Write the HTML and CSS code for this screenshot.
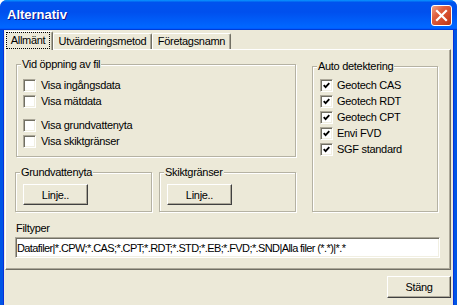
FILE: index.html
```html
<!DOCTYPE html>
<html lang="sv">

<head>
  <meta charset="UTF-8">
  <meta name="viewport" content="width=device-width, initial-scale=1.0">
  <title>Alternativ</title>
  <link rel="stylesheet" href="styles.css">
</head>

<body>
  <div class="window">
    <div class="titlebar">
      <span class="title">Alternativ</span>
      <button class="close" aria-label="Stäng">
        <svg width="13" height="13" viewBox="0 0 13 13">
          <path d="M2 2L11 11M11 2L2 11" stroke="#fff" stroke-width="2.2" stroke-linecap="square" />
        </svg>
      </button>
    </div>

    <div class="frame">
      <div class="tabs">
        <div class="tab active"><span class="focus">Allmänt</span></div>
        <div class="tab tab-method">Utvärderingsmetod</div>
        <div class="tab tab-company">Företagsnamn</div>
      </div>

      <div class="panel">
        <fieldset class="group open-group">
          <legend>Vid öppning av fil</legend>
          <label class="check"><span class="box"></span>Visa ingångsdata</label>
          <label class="check"><span class="box"></span>Visa mätdata</label>
          <div class="spacer"></div>
          <label class="check"><span class="box"></span>Visa grundvattenyta</label>
          <label class="check"><span class="box"></span>Visa skiktgränser</label>
        </fieldset>

        <fieldset class="group auto-group">
          <legend>Auto detektering</legend>
          <label class="check"><span class="box checked"><svg width="7" height="7" viewBox="0 0 7 7"><path d="M0.7 3.2L2.6 5.1L6.3 1.2" stroke="#000" stroke-width="1.8" fill="none" /></svg></span>Geotech CAS</label>
          <label class="check"><span class="box checked"><svg width="7" height="7" viewBox="0 0 7 7"><path d="M0.7 3.2L2.6 5.1L6.3 1.2" stroke="#000" stroke-width="1.8" fill="none" /></svg></span>Geotech RDT</label>
          <label class="check"><span class="box checked"><svg width="7" height="7" viewBox="0 0 7 7"><path d="M0.7 3.2L2.6 5.1L6.3 1.2" stroke="#000" stroke-width="1.8" fill="none" /></svg></span>Geotech CPT</label>
          <label class="check"><span class="box checked"><svg width="7" height="7" viewBox="0 0 7 7"><path d="M0.7 3.2L2.6 5.1L6.3 1.2" stroke="#000" stroke-width="1.8" fill="none" /></svg></span>Envi FVD</label>
          <label class="check"><span class="box checked"><svg width="7" height="7" viewBox="0 0 7 7"><path d="M0.7 3.2L2.6 5.1L6.3 1.2" stroke="#000" stroke-width="1.8" fill="none" /></svg></span>SGF standard</label>
        </fieldset>

        <div class="line-groups">
          <fieldset class="group small-group">
            <legend>Grundvattenyta</legend>
            <button class="btn line-btn">Linje..</button>
          </fieldset>
          <fieldset class="group small-group">
            <legend>Skiktgränser</legend>
            <button class="btn line-btn">Linje..</button>
          </fieldset>
        </div>

        <div class="filetypes">
          <div class="field-label">Filtyper</div>
          <input class="text-input" type="text" value="Datafiler|*.CPW;*.CAS;*.CPT;*.RDT;*.STD;*.EB;*.FVD;*.SND|Alla filer (*.*)|*.*">
        </div>
      </div>

      <div class="footer">
        <button class="btn close-btn">Stäng</button>
      </div>
    </div>
  </div>
</body>

</html>
```

FILE: styles.css
```css
body {
  margin: 0;
  background-color: #fff;
  font-family: 'Liberation Sans', Arial, sans-serif;
  font-size: 11px;
  letter-spacing: -0.3px;
  color: #000;
}

.window {
  width: 457px;
  height: 305px;
  box-sizing: border-box;
  border-radius: 7px 7px 0 0;
  overflow: hidden;
  background-color: #0055e5;
}

/* Title bar */
.titlebar {
  height: 30px;
  box-sizing: border-box;
  display: flex;
  justify-content: space-between;
  align-items: flex-start;
  padding: 0 5px 0 7px;
  background: linear-gradient(180deg, #0997ff, #0053ee 8%, #0050ee 40%, #0066ff 88%, #0066ff 93%, #005bff 95%, #003dd7 96%, #003dd7);
}

.title {
  line-height: 30px;
  font-size: 13px;
  font-weight: bold;
  letter-spacing: 0;
  color: #fff;
  text-shadow: 1px 1px #0f1089;
}

.close {
  margin-top: 5px;
  width: 21px;
  height: 21px;
  padding: 0;
  display: flex;
  align-items: center;
  justify-content: center;
  border: 1px solid #fff;
  border-radius: 3px;
  background: linear-gradient(135deg, #f0a48a 0%, #e0603f 35%, #cf4424 75%, #b93512 100%);
}

/* Window body */
.frame {
  height: 275px;
  box-sizing: border-box;
  margin: 0 4px;
  padding-top: 1px;
  background-color: #ece9d8;
  box-shadow: -1px 0 #0831d9, 1px 0 #0831d9;
}

.tabs {
  display: flex;
  align-items: flex-end;
  height: 19px;
  margin: 0 0 -1px 1px;
}

.tab {
  box-sizing: border-box;
  height: 16px;
  margin-bottom: 1px;
  line-height: 15px;
  text-align: center;
  white-space: nowrap;
  background-color: #ece9d8;
  border-top: 1px solid #fff;
  border-left: 1px solid #fff;
  border-right: 1px solid #716f64;
  border-radius: 2px 2px 0 0;
  box-shadow: inset -1px 0 #aca899;
}

.tab.active {
  width: 48px;
  height: 19px;
  margin-bottom: 0;
}

.tab-method {
  width: 99px;
}

.tab-company {
  width: 79px;
}

.focus {
  display: block;
  box-sizing: border-box;
  width: 44px;
  height: 17px;
  line-height: 14px;
  border: 1px dotted #000;
}

.panel {
  box-sizing: border-box;
  height: 221px;
  margin: 0 2px 0 1px;
  padding: 8px 0 0 9px;
  border-top: 1px solid #fff;
  border-left: 1px solid #fff;
  border-right: 1px solid #716f64;
  border-bottom: 1px solid #716f64;
  box-shadow: inset -1px -1px #aca899;
  display: grid;
  grid-template-columns: 281px 127px;
  grid-template-rows: auto auto auto;
  column-gap: 16px;
  align-content: start;
}

/* Group boxes */
.group {
  margin: 0;
  padding: 0 0 0 4px;
  min-width: 0;
  border: 1px solid #b5b2a3;
  box-shadow: 1px 1px #fff, inset 1px 1px #fff;
}

.group legend {
  padding: 0 1px;
  line-height: 12px;
  background-color: #ece9d8;
}

.open-group {
  grid-column: 1;
  grid-row: 1;
  width: 280px;
  margin-left: 1px;
  box-sizing: border-box;
  padding-top: 7px;
  padding-bottom: 7px;
}

.auto-group {
  grid-column: 2;
  grid-row: 1 / 3;
  width: 126px;
  box-sizing: border-box;
  margin-top: 2px;
  padding-top: 5px;
}

.check {
  display: flex;
  align-items: center;
  gap: 5px;
  height: 16px;
  white-space: nowrap;
}

.open-group .check {
  margin-left: 2px;
}

.auto-group .check {
  margin-left: 3px;
  gap: 4px;
}

.spacer {
  height: 8px;
}

.box {
  box-sizing: border-box;
  width: 13px;
  height: 13px;
  flex-shrink: 0;
  display: flex;
  align-items: center;
  justify-content: center;
  background-color: #fff;
  border-top: 1px solid #aca899;
  border-left: 1px solid #aca899;
  border-right: 1px solid #fff;
  border-bottom: 1px solid #fff;
  box-shadow: inset 1px 1px #716f64, inset -1px -1px #f1efe2;
}

.line-groups {
  grid-column: 1;
  grid-row: 2;
  display: flex;
  gap: 7px;
  margin-top: 9px;
}

.small-group {
  width: 137px;
  box-sizing: border-box;
  padding-top: 6px;
  padding-bottom: 6px;
}

/* Buttons */
.btn {
  box-sizing: border-box;
  padding: 0;
  font-family: inherit;
  font-size: 11px;
  letter-spacing: -0.3px;
  color: #000;
  background-color: #ece9d8;
  border-top: 1px solid #fff;
  border-left: 1px solid #fff;
  border-right: 1px solid #404040;
  border-bottom: 1px solid #404040;
  box-shadow: inset -1px -1px #aca899;
}

.line-btn {
  display: block;
  width: 65px;
  height: 21px;
  margin-left: 3px;
}

.filetypes {
  grid-column: 1 / 3;
  grid-row: 3;
}

.field-label {
  margin: 10px 0 0 1px;
  line-height: 13px;
}

.text-input {
  display: block;
  box-sizing: border-box;
  width: 425px;
  height: 21px;
  margin-top: 2px;
  padding: 0 0 0 1px;
  font-family: inherit;
  font-size: 11px;
  letter-spacing: -0.6px;
  color: #000;
  background-color: #fff;
  border-top: 1px solid #aca899;
  border-left: 1px solid #aca899;
  border-right: 1px solid #fff;
  border-bottom: 1px solid #fff;
  box-shadow: inset 1px 1px #716f64, inset -1px -1px #f1efe2;
  outline: none;
}

.footer {
  display: flex;
  justify-content: flex-end;
  padding: 6px 2px 0 0;
}

.close-btn {
  width: 64px;
  height: 22px;
}
```
